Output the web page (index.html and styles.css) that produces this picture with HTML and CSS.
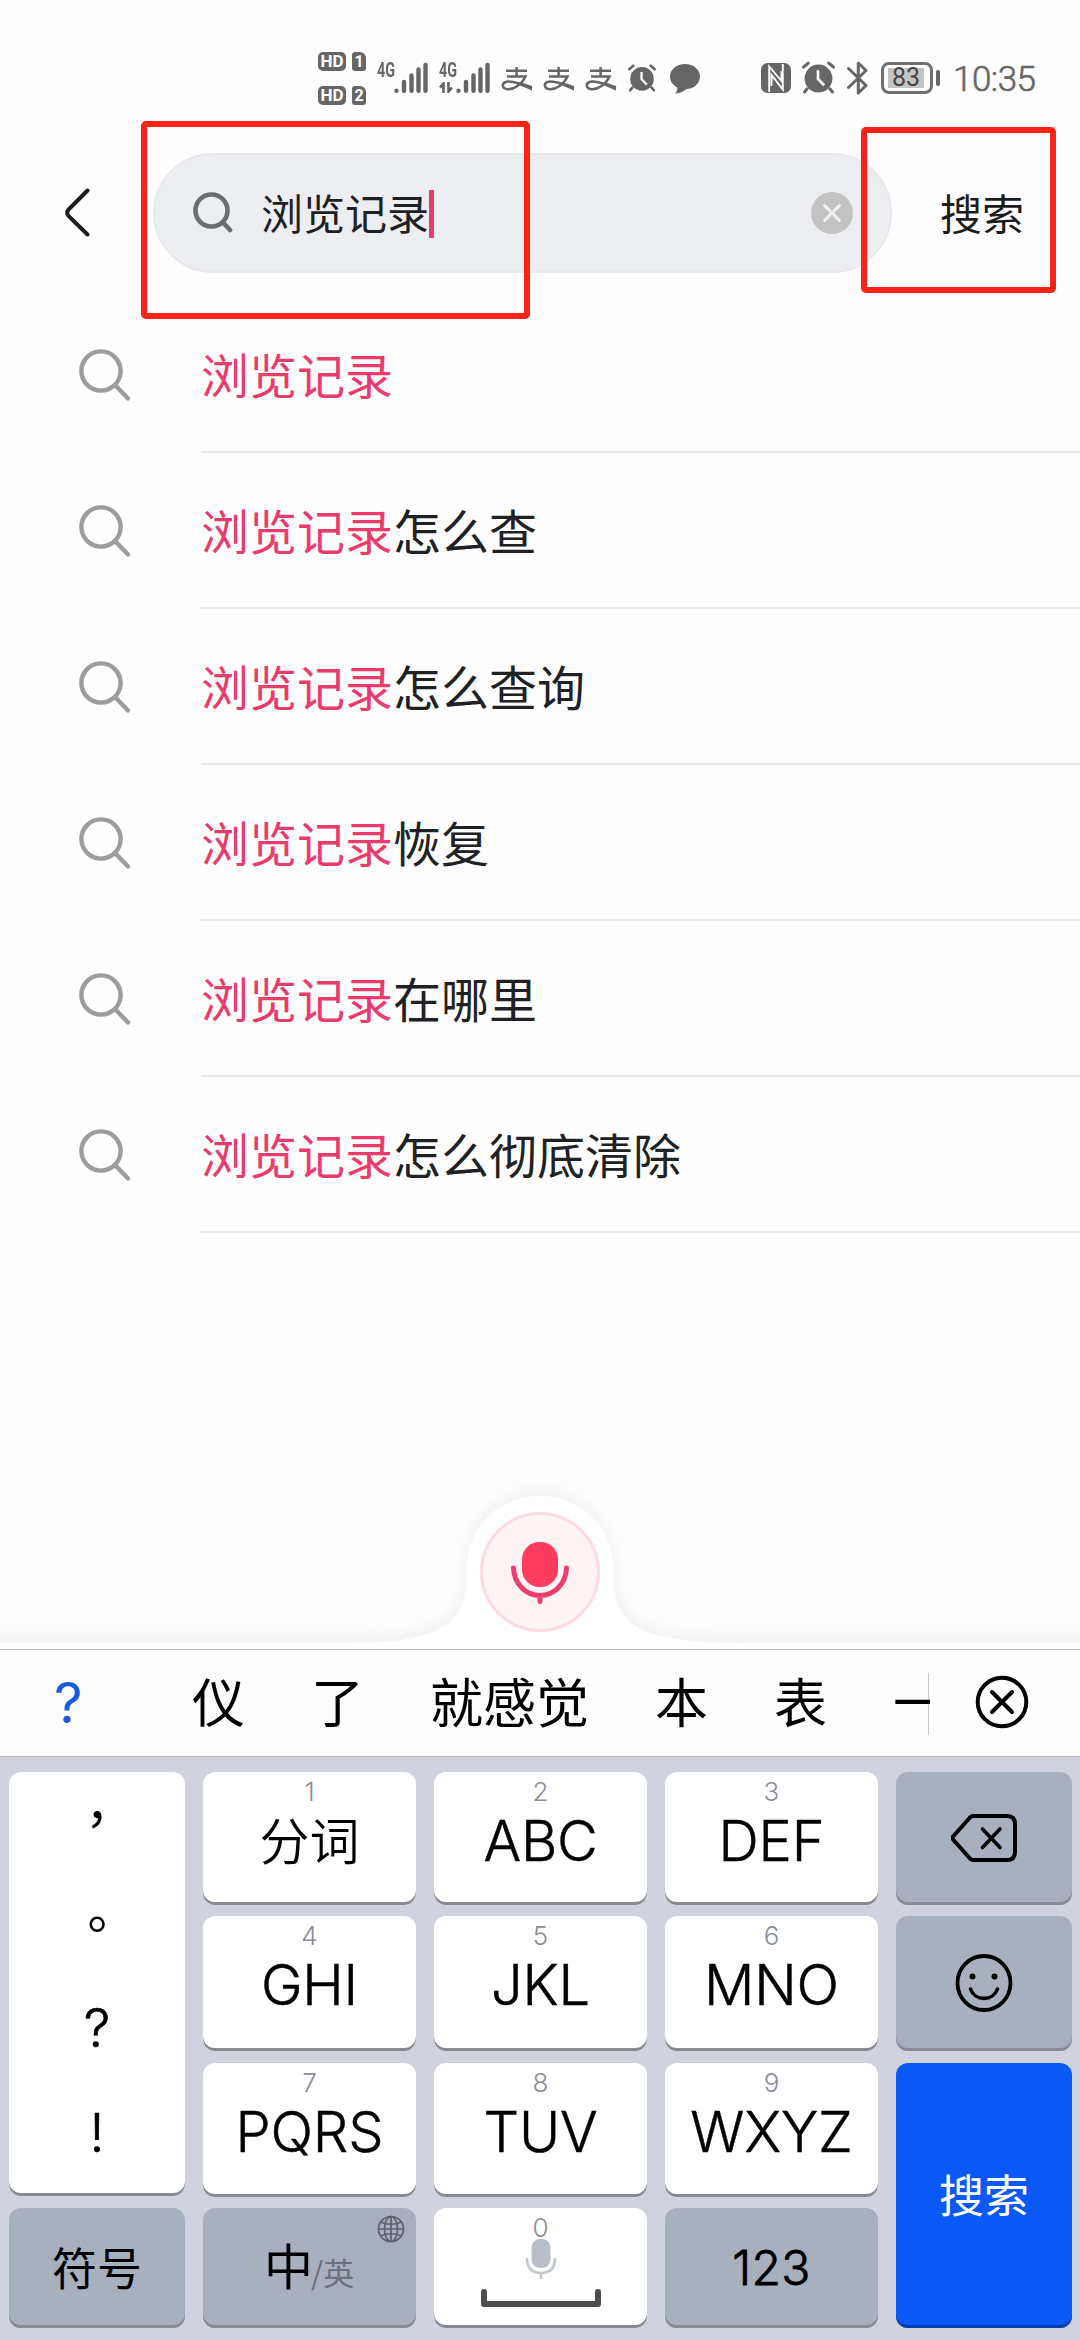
FILE: index.html
```html
<!DOCTYPE html>
<html lang="zh-CN">
<head>
<meta charset="utf-8">
<title>搜索</title>
<link rel="stylesheet" href="styles.css">
</head>
<body>
<svg width="0" height="0" class="defs">
  <defs>
    <symbol id="search" viewBox="0 0 54 54">
      <circle cx="23" cy="23" r="19.6" fill="none" stroke="currentColor" stroke-width="4.4"/>
      <path d="M37 37 50 50.500" fill="none" stroke="currentColor" stroke-width="4.400" stroke-linecap="round"/>
    </symbol>
    <symbol id="search-bold" viewBox="0 0 40 42">
      <circle cx="18.500" cy="18.500" r="16" fill="none" stroke="currentColor" stroke-width="4.600"/>
      <path d="M30.500 31 37 38" fill="none" stroke="currentColor" stroke-width="4.600" stroke-linecap="round"/>
    </symbol>
    <symbol id="pay" viewBox="0 0 32 26">
      <path d="M5 4.800H26M15.600 1V10.500M6 10.500H24.500C21 18 13 24 6 23.200C1 22.500 .5 17.500 4.500 16C11 13.800 20 19 31 22" fill="none" stroke="currentColor" stroke-width="2.500"/>
      <path d="M19 16 31 20V24.500L17 18.500Z" fill="currentColor"/>
    </symbol>
    <symbol id="alarm" viewBox="0 0 32 32">
      <circle cx="16" cy="17" r="13.500" fill="currentColor"/>
      <path d="M1.500 6 6 2M30.500 6 26 2M5 27 2.500 30M27 27 29.500 30" stroke="currentColor" stroke-width="3" stroke-linecap="round"/>
      <path d="M15.500 9V17.500L21.500 23.500" fill="none" stroke="#fff" stroke-width="2.600"/>
    </symbol>
    <symbol id="signal" viewBox="0 0 34 32">
      <path d="M2.500 28.700V28.800M10 20V28.800M17.500 13.500V28.800M24.500 7.500V28.800M31.500 3V28.800" stroke="currentColor" stroke-width="4.400" stroke-linecap="round"/>
    </symbol>
  </defs>
</svg>

<main class="screen">
  <header class="status">
    <div class="hd">
      <div class="hd-row"><span class="hd-tag">HD</span><span class="sim">1</span></div>
      <div class="hd-row"><span class="hd-tag">HD</span><span class="sim">2</span></div>
    </div>
    <div class="net"><span class="gen">4G</span><svg class="bars"><use href="#signal"/></svg></div>
    <div class="net"><span class="gen">4G</span><svg class="updown" viewBox="0 0 15 11"><path d="M4.500 11V1.500L1 5.500M9.500 0V9.500L13 5.500" fill="none" stroke="currentColor" stroke-width="2.600"/></svg><svg class="bars"><use href="#signal"/></svg></div>
    <div class="notices">
      <svg class="pay"><use href="#pay"/></svg>
      <svg class="pay"><use href="#pay"/></svg>
      <svg class="pay"><use href="#pay"/></svg>
    </div>
    <svg class="alarm"><use href="#alarm"/></svg>
    <svg class="bubble" viewBox="0 0 32 31"><path d="M16 1C24.500 1 31 6.500 31 13.500S24.500 26 17.500 26C14 29 9.500 30.500 6 30.500C8 29 8.500 27 8.300 24.500C3.500 22 1 18 1 13.500C1 6.500 7.500 1 16 1Z" fill="currentColor"/></svg>
    <svg class="nfc" viewBox="0 0 30 30"><rect width="30" height="30" rx="6.500" fill="currentColor"/><path d="M8.200 29V3.500L20.500 18V8M21.800 1V26.500L10.500 12V23" fill="none" stroke="#fff" stroke-width="1.900"/></svg>
    <svg class="alarm alarm-b"><use href="#alarm"/></svg>
    <svg class="bt" viewBox="0 0 21 34"><path d="M1.500 7.500 19 24.500 11.300 32V2L19 9.500 1.500 26.500" fill="none" stroke="currentColor" stroke-width="3" stroke-linejoin="round" stroke-linecap="round"/></svg>
    <div class="battery"><span class="level">83</span></div><i class="tip"></i>
    <span class="clock">10:35</span>
  </header>

  <section class="searchbar">
    <svg class="back" viewBox="0 0 26 50"><path d="M22.500 2.500 3.500 21.500Q1 25 3.500 28L22.500 46.500" fill="none" stroke="#1c1c1e" stroke-width="4" stroke-linecap="round"/></svg>
    <div class="field">
      <svg class="field-icon"><use href="#search-bold"/></svg>
      <span class="query">浏览记录</span><i class="caret"></i>
      <svg class="clear" viewBox="0 0 42 42"><circle cx="21" cy="21" r="21" fill="#c3c3c4"/><path d="M13.500 13.500 28.500 28.500M28.500 13.500 13.500 28.500" stroke="#f1f1f3" stroke-width="3" stroke-linecap="round"/></svg>
    </div>
    <span class="go">搜索</span>
    <div class="mark mark-query"></div>
    <div class="mark mark-go"></div>
  </section>

  <ul class="suggestions">
    <li><svg><use href="#search"/></svg><p><em>浏览记录</em></p></li>
    <li><svg><use href="#search"/></svg><p><em>浏览记录</em>怎么查</p></li>
    <li><svg><use href="#search"/></svg><p><em>浏览记录</em>怎么查询</p></li>
    <li><svg><use href="#search"/></svg><p><em>浏览记录</em>恢复</p></li>
    <li><svg><use href="#search"/></svg><p><em>浏览记录</em>在哪里</p></li>
    <li><svg><use href="#search"/></svg><p><em>浏览记录</em>怎么彻底清除</p></li>
  </ul>

  <svg class="voice" viewBox="0 0 1080 189">
    <path class="voice-base" d="M-40 183H330C400 183 405 180 430 173C450 166 465 150 466 127C467 105 465 108 467 100C472 62 502 36 540 36S608 62 613 100C615 108 613 105 614 127C615 150 630 166 650 173C675 180 700 184 760 183H1120V230H-40Z"/>
    <circle cx="540" cy="112" r="58.500" fill="#fef4f5" stroke="#fddbe2" stroke-width="3"/>
    <rect x="522" y="82" width="36" height="45" rx="17.500" fill="#fc3b5e"/>
    <path d="M513.500 108C514 124 526 135.500 540 135.500S566 124 566.500 108M540 136V141.500" fill="none" stroke="#ec3d6b" stroke-width="5" stroke-linecap="round"/>
  </svg>

  <section class="candidates">
    <span class="tone">?</span>
    <div class="words"><span>仪</span><span>了</span><span>就感觉</span><span>本</span><span>表</span><span>一</span></div>
    <svg class="dismiss" viewBox="0 0 54 54"><circle cx="27" cy="27" r="24.300" fill="none" stroke="#000" stroke-width="4"/><path d="M17 17 37 37M37 17 17 37" stroke="#000" stroke-width="4" stroke-linecap="round"/></svg>
  </section>

  <section class="keyboard">
    <div class="key punct"><span>，</span><span>。</span><span class="latin">?</span><span class="latin">!</span></div>
    <div class="key"><small>1</small><b class="han">分词</b></div>
    <div class="key"><small>2</small><b>ABC</b></div>
    <div class="key"><small>3</small><b>DEF</b></div>
    <div class="key dark"><svg class="del" viewBox="0 0 66 48"><path d="M22 2H56Q64 2 64 10V38Q64 46 56 46H22Q20.500 46 19 44.500L2.500 26Q1 24 2.500 22L19 3.500Q20.500 2 22 2Z" fill="none" stroke="#000" stroke-width="4"/><path d="M31.500 15 49 33.500M49 15 31.500 33.500" stroke="#000" stroke-width="3.600" stroke-linecap="round"/></svg></div>

    <div class="key"><small>4</small><b>GHI</b></div>
    <div class="key"><small>5</small><b>JKL</b></div>
    <div class="key"><small>6</small><b>MNO</b></div>
    <div class="key dark"><svg class="face" viewBox="0 0 58 58"><ellipse cx="29" cy="29" rx="26.500" ry="27" fill="none" stroke="#000" stroke-width="3.800"/><circle cx="17.500" cy="22.500" r="3"/><circle cx="39.500" cy="22.500" r="3"/><path d="M15.500 35C20 47.500 38 47.500 42.500 35" fill="none" stroke="#000" stroke-width="3.600" stroke-linecap="round"/></svg></div>

    <div class="key low"><small>7</small><b>PQRS</b></div>
    <div class="key low"><small>8</small><b>TUV</b></div>
    <div class="key low"><small>9</small><b>WXYZ</b></div>
    <div class="key enter low">搜索</div>

    <div class="key dark sym">符号</div>
    <div class="key dark lang"><span class="zh">中</span><span class="en">/英</span><svg class="globe" viewBox="0 0 28 28"><g fill="none" stroke="#5c626c" stroke-width="1.700"><circle cx="14" cy="14" r="12.500"/><ellipse cx="14" cy="14" rx="6.500" ry="12.500"/><path d="M14 1.500V26.500M1.500 14H26.500M3.500 7Q14 11.500 24.500 7M3.500 21Q14 16.500 24.500 21"/></g></svg></div>
    <div class="key space"><small>0</small><svg class="spacebar" viewBox="0 0 120 69"><rect x="50.500" y="1" width="19" height="29" rx="8.500" fill="#b9bec8"/><path d="M46 20C46 30 51 35 60 35S74 30 74 20M60 35V41" fill="none" stroke="#c3c7ce" stroke-width="2.600"/><path d="M3 54V66H117V54" fill="none" stroke="#4d4d4d" stroke-width="6" stroke-linecap="round" stroke-linejoin="round"/></svg></div>
    <div class="key dark num">123</div>
  </section>
</main>
</body>
</html>
```
FILE: styles.css
```css
* { box-sizing: border-box; margin: 0; padding: 0; }

body {
  width: 1080px;
  background: #fff;
  font-family: "Noto Sans CJK SC", "Noto Sans", sans-serif;
}

.defs { position: absolute; }
svg { display: block; flex: none; }

.screen {
  position: relative;
  display: flex;
  flex-direction: column;
  width: 1080px;
  height: 2340px;
  overflow: hidden;
  background: #fefefe;
}

/* Status bar */
.status {
  display: flex;
  align-items: flex-start;
  height: 121px;
  padding: 52px 0 0 318px;
  color: #666;
}
.hd { display: flex; flex-direction: column; gap: 15px; width: 59px; }
.hd-row { display: flex; gap: 6px; height: 19px; }
.hd-tag, .sim {
  height: 19px;
  background: #666;
  color: #fff;
  font: 700 17px/19px Roboto, sans-serif;
  text-align: center;
}
.hd-tag { width: 28px; border-radius: 5px; }
.sim { width: 14px; border-radius: 3px 6px 3px 3px; font-size: 16px; }
.net { position: relative; width: 62px; height: 42px; }
.gen {
  display: block;
  width: 24px;
  padding-top: 10px;
  font: 700 20px/16px Roboto, sans-serif;
  transform: scaleX(.72);
  transform-origin: 0 0;
}
.bars { position: absolute; left: 17px; top: 10px; width: 34px; height: 32px; }
.updown { position: absolute; left: 0; top: 30px; width: 15px; height: 11px; }
.notices { display: flex; gap: 10px; width: 126px; padding-top: 14px; }
.pay { width: 32px; height: 26px; }
.alarm { width: 28px; height: 28px; margin: 12px 13px 0 1px; }
.bubble { width: 32px; height: 31px; margin-top: 11px; }
.nfc { width: 30px; height: 30px; margin: 11px 11px 0 60px; }
.alarm-b { width: 33px; height: 33px; margin: 9px 12px 0 0; }
.bt { width: 21px; height: 34px; margin: 9px 13px 0 0; }
.battery {
  width: 52px;
  height: 32px;
  margin-top: 10px;
  padding: 3px 4px;
  border: 3px solid #707070;
  border-radius: 8px;
}
.level {
  display: block;
  width: 36px;
  height: 20px;
  background: #c4c4c4;
  font: 400 25px/20px Roboto, sans-serif;
  color: #444;
  text-align: center;
}
.tip { width: 4px; height: 16px; margin: 18px 13px 0 3px; border-radius: 2px; background: #666; }
.clock {
  margin-top: 8px;
  font: 300 35px/40px Roboto, sans-serif;
  letter-spacing: -.5px;
  -webkit-text-stroke: .6px #666;
}

/* Search bar */
.searchbar {
  position: relative;
  display: flex;
  align-items: center;
  height: 175px;
  padding-left: 65px;
}
.back { width: 26px; height: 50px; margin-top: 9px; }
.field {
  display: flex;
  align-items: center;
  width: 739px;
  height: 120px;
  margin: 9px 0 0 62px;
  padding: 0 37px 0 38px;
  border: 2px solid #e8e9eb;
  border-radius: 60px;
  background: #eceef2;
}
.field-icon { width: 40px; height: 42px; margin-top: -1px; color: #6b6d70; }
.query { margin: -2px 0 0 28px; font-size: 42px; line-height: 60px; color: #1f2023; }
.caret { width: 5px; height: 48px; margin: 2px auto 0 0; background: #ea3c6c; }
.clear { width: 42px; height: 42px; }
.go { margin: 7px 0 0 48px; font-size: 42px; line-height: 60px; color: #1c1c1e; }
.mark { position: absolute; border: 6px solid #fb2216; border-radius: 5px; }
.mark-query { left: 141px; top: 0; width: 389px; height: 198px; }
.mark-go { left: 861px; top: 6px; width: 195px; height: 166px; }

/* Suggestions */
.suggestions { list-style: none; height: 1164px; }
.suggestions li { display: flex; height: 156px; padding-left: 78px; color: #9c9c9c; }
.suggestions svg { width: 54px; height: 54px; margin-top: 52px; }
.suggestions p {
  flex: 1;
  height: 157px;
  margin-left: 69px;
  border-bottom: 2px solid #e9e9e9;
  font-size: 48px;
  line-height: 154px;
  color: #202124;
}
.suggestions em { font-style: normal; color: #ea3c6c; }

/* Voice button hump */
.voice { width: 1080px; height: 189px; overflow: hidden; }
.voice-base { fill: #fff; filter: drop-shadow(0 -4px 9px rgba(0, 0, 0, .055)); }

/* Candidate row */
.candidates {
  display: flex;
  align-items: center;
  height: 108px;
  border-top: 1px solid #b4b4b6;
  border-bottom: 1px solid #b4b4b6;
  background: #fefefe;
}
.tone { width: 192px; padding-left: 54px; font: 400 56px/60px Inter, sans-serif; color: #165be0; }
.words {
  display: flex;
  gap: 66px;
  width: 738px;
  height: 106px;
  overflow: hidden;
  font-size: 53px;
  line-height: 101px;
  color: #000;
  white-space: nowrap;
  background: linear-gradient(#c8c8c8, #c8c8c8) 736px 23px / 1px 62px no-repeat;
}
.dismiss { width: 54px; height: 54px; margin: -2px 0 0 45px; }

/* Keyboard */
.keyboard {
  display: grid;
  grid-template-columns: 176px repeat(3, 213px) 176px;
  grid-template-rows: 133px 135px 135px 120px;
  gap: 11px 18px;
  height: 583px;
  padding: 15px 0 0 9px;
  background: #d0d3dd;
}
.key {
  position: relative;
  display: flex;
  flex-direction: column;
  align-items: center;
  padding-top: 6px;
  border-radius: 12px;
  background: #fff;
  box-shadow: inset 0 -3px 0 #898a8f;
  color: #000;
}
.low { margin-top: 1px; }
.key small { font: 300 26px/28px Inter, sans-serif; color: #8b8d94; }
.key b {
  margin-top: 5px;
  font: 300 56px/60px Inter, sans-serif;
  letter-spacing: -.2px;
  -webkit-text-stroke: .5px #000;
}
.key b.han {
  margin-top: 2px;
  font: 350 50px/60px "Noto Sans CJK SC", sans-serif;
  letter-spacing: 0;
  -webkit-text-stroke: 0;
}
.key.dark { justify-content: center; padding: 0 0 2px; background: #a8afbd; box-shadow: inset 0 -3px 0 #858a93; }
.punct { grid-row: span 3; margin-bottom: 1px; padding: 0; }
.punct span { flex: none; height: 105px; font: 400 50px/105px "Noto Sans CJK TC", sans-serif; }
.punct span:first-child { margin-top: -8px; }
.punct .latin { padding-top: 2px; font-family: Inter, sans-serif; font-weight: 300; font-size: 53px; -webkit-text-stroke: .6px #000; }
.del { width: 66px; height: 48px; }
.face { width: 58px; height: 58px; }
.key.enter {
  grid-column: 5;
  grid-row: 3 / span 2;
  justify-content: center;
  padding: 0 0 4px;
  background: #0a59f7;
  box-shadow: inset 0 -3px 0 #0b3fae;
  color: #fff;
  font-size: 45px;
}
.key.sym { padding-bottom: 3px; font-size: 45px; }
.key.lang { flex-direction: row; align-items: baseline; justify-content: flex-start; padding: 20px 0 0 61px; }
.zh { font-size: 49px; line-height: 72px; }
.en { margin-left: -2px; font-size: 31px; color: #6c717b; }
.globe { position: absolute; right: 11px; top: 7px; width: 28px; height: 28px; }
.spacebar { width: 120px; height: 69px; margin-top: -4px; }
.key.num { padding: 0 0 1px; font: 300 48px/60px Inter, sans-serif; letter-spacing: .4px; -webkit-text-stroke: .8px #000; }
```
